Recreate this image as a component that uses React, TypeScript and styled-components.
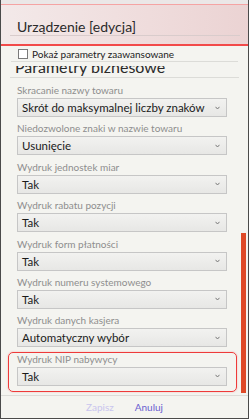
import styled, { createGlobalStyle, css } from 'styled-components'

const GlobalStyle = createGlobalStyle`
  html, body {
    margin: 0;
    padding: 0;
    background: #f3f3ef;
  }
  body {
    font-family: Lato, 'Open Sans', sans-serif;
  }
`

const Window = styled.div`
  width: 249px;
  height: 419px;
  box-sizing: border-box;
  border: 1px solid #4a4a4a;
  border-top: none;
  background: #f4f4f0;
  display: flex;
  flex-direction: column;
  position: relative;
  overflow: hidden;
`

const Header = styled.div`
  height: 46px;
  flex: none;
  box-sizing: border-box;
  padding-top: 4px;
  background: #ebe7e7;
`

const HeaderBand = styled.div`
  height: 42px;
  box-sizing: border-box;
  border-top: 1px solid #f5a3a3;
  border-bottom: 2px solid #f24a4a;
  background: linear-gradient(90deg, #f3e9e9 0%, #efdcdc 60%, #ebd3d3 100%);
  padding: 0 8px 0 9px;
`

const Title = styled.h1`
  margin: 0;
  padding: 12.6px 0 0.4px 7px;
  font-size: 14px;
  font-weight: 400;
  line-height: 17px;
  color: #2a2a2a;
  border-bottom: 1px solid #d9cccc;
`

const CheckRow = styled.label`
  display: flex;
  flex: none;
  align-items: center;
  gap: 4px;
  margin: 0 10px;
  padding: 0 0 0 7px;
  height: 15px;
  border-bottom: 1px solid #dcdcd8;
  font-size: 10px;
  line-height: 12px;
  color: #222;
`

const Box = styled.span`
  width: 10px;
  height: 10px;
  box-sizing: border-box;
  border: 1px solid #7a7a7a;
  background: #fff;
  flex: none;
`

const Viewport = styled.div`
  flex: 1;
  min-height: 0;
  margin-top: 4px;
  overflow: hidden;
`

// the form is shown scrolled a few pixels, so the heading is cut at the top
const Section = styled.h2`
  margin: -9px 9px 0 9px;
  padding: 0 0 0 5px;
  font-size: 16px;
  font-weight: 400;
  line-height: 20px;
  color: #2a2a2a;
  border-bottom: 1px solid #dcdcd8;
`

const List = styled.div`
  display: flex;
  flex-direction: column;
  gap: 4.4px;
  padding: 5px 21px 30px 16px;
`

const Field = styled.div<{ $highlighted?: boolean }>`
  position: relative;
  display: flex;
  flex-direction: column;
  ${(p) =>
    p.$highlighted &&
    css`
      &::before {
        content: '';
        position: absolute;
        inset: 0 -10px -6px -9px;
        border: 1.5px solid #ee3a3a;
        border-radius: 5px;
        box-shadow: 0 0 2px rgba(238, 58, 58, 0.35);
        pointer-events: none;
      }
    `}
`

const Label = styled.span`
  font-size: 10px;
  line-height: 15px;
  color: #8e8e8e;
  white-space: nowrap;
`

const Select = styled.div`
  height: 19px;
  box-sizing: border-box;
  border: 1px solid #c6c6c6;
  background: linear-gradient(180deg, #f2f2f0 0%, #e7e7e5 100%);
  display: flex;
  align-items: center;
  justify-content: space-between;
  padding: 0 6px 0 4px;
  font-size: 11.5px;
  color: #1a1a1a;
  white-space: nowrap;
`

const Chevron = styled.svg`
  width: 5px;
  height: 4px;
  flex: none;
`

const Thumb = styled.div`
  position: absolute;
  right: 2px;
  top: 233px;
  width: 5px;
  height: 160px;
  background: #df4a28;
`

const Footer = styled.div`
  height: 23px;
  flex: none;
  box-sizing: border-box;
  border-top: 1px solid #dcdcd8;
  display: flex;
  justify-content: center;
  align-items: center;
  gap: 21px;
  padding-bottom: 1px;
`

const FooterButton = styled.button<{ $disabled?: boolean }>`
  border: none;
  background: none;
  padding: 0;
  font-family: inherit;
  font-size: 10px;
  color: ${(p) => (p.$disabled ? '#c9c5ee' : '#6a5fd0')};
`

const fields = [
  { label: 'Skracanie nazwy towaru', value: 'Skrót do maksymalnej liczby znaków' },
  { label: 'Niedozwolone znaki w nazwie towaru', value: 'Usunięcie' },
  { label: 'Wydruk jednostek miar', value: 'Tak' },
  { label: 'Wydruk rabatu pozycji', value: 'Tak' },
  { label: 'Wydruk form płatności', value: 'Tak' },
  { label: 'Wydruk numeru systemowego', value: 'Tak' },
  { label: 'Wydruk danych kasjera', value: 'Automatyczny wybór' },
  { label: 'Wydruk NIP nabywycy', value: 'Tak', highlighted: true },
]

export default function App() {
  return (
    <>
      <GlobalStyle />
      <Window>
        <Header>
          <HeaderBand>
            <Title>Urządzenie [edycja]</Title>
          </HeaderBand>
        </Header>
        <CheckRow>
          <Box />
          Pokaż parametry zaawansowane
        </CheckRow>
        <Viewport>
          <Section>Parametry biznesowe</Section>
          <List>
            {fields.map((f) => (
              <Field key={f.label} $highlighted={f.highlighted}>
                <Label>{f.label}</Label>
                <Select>
                  {f.value}
                  <Chevron viewBox="0 0 5 4">
                    <path d="M0.5 0.8 L2.5 3 L4.5 0.8" fill="none" stroke="#777" strokeWidth="1" />
                  </Chevron>
                </Select>
              </Field>
            ))}
          </List>
        </Viewport>
        <Thumb />
        <Footer>
          <FooterButton $disabled>Zapisz</FooterButton>
          <FooterButton>Anuluj</FooterButton>
        </Footer>
      </Window>
    </>
  )
}
